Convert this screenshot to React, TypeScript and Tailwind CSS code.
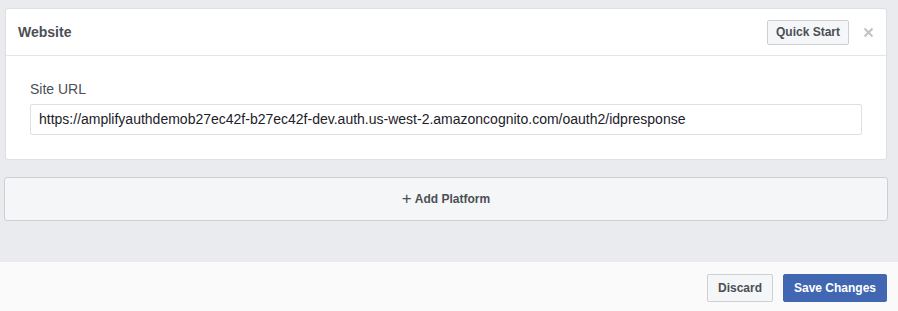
import React from "react";

export default function App() {
  return (
    <div
      className="w-[898px] h-[311px] flex flex-col overflow-hidden"
      style={{ fontFamily: '"Liberation Sans", Arial, sans-serif' }}
    >
      <div className="h-[262px] bg-[#e9ebee] pt-[8px] pl-[4px] pr-[10px] flex flex-col">
        <div className="mx-[1px] h-[152px] bg-white border border-[#dddfe2] rounded-[3px] flex flex-col">
          <div className="h-[47px] shrink-0 border-b border-[#e5e5e5] flex items-center pl-[12px] pr-[12px]">
            <div className="text-[14px] font-bold text-[#4b4f56]">Website</div>
            <div className="flex-1" />
            <button className="h-[25px] w-[82px] bg-[#f5f6f7] border border-[#ccd0d5] rounded-[2px] text-[12px] font-bold text-[#4b4f56] flex items-center justify-center">
              Quick Start
            </button>
            <div className="ml-[14px] w-[11px] h-[11px] flex items-center justify-center">
              <svg width="11" height="11" viewBox="0 0 11 11">
                <path d="M1.5 1.5 L9.5 9.5 M9.5 1.5 L1.5 9.5" stroke="#bec2c9" strokeWidth="2" />
              </svg>
            </div>
          </div>
          <div className="pt-[25px] px-[24px] flex flex-col">
            <div className="text-[14px] text-[#4b4f56] leading-[17px]">Site URL</div>
            <div className="mt-[6px] h-[31px] border border-[#dddfe2] rounded-[2px] flex items-center px-[8px] text-[14px] text-[#1d2129]">
              https://amplifyauthdemob27ec42f-b27ec42f-dev.auth.us-west-2.amazoncognito.com/oauth2/idpresponse
            </div>
          </div>
        </div>
        <div className="mt-[17px] h-[44px] bg-[#f5f6f7] border border-[#ccd0d5] rounded-[3px] flex items-center justify-center text-[12px] font-bold text-[#4b4f56]">
          <span className="text-[17px] font-normal mr-[3px] leading-none relative top-[-1px]">+</span>
          Add Platform
        </div>
      </div>
      <div className="flex-1 bg-[#fafafa] flex items-center justify-end pr-[11px] pt-[3px]">
        <button className="h-[28px] w-[66px] bg-[#f5f6f7] border border-[#ccd0d5] rounded-[2px] text-[12px] font-bold text-[#4b4f56]">
          Discard
        </button>
        <button className="ml-[10px] h-[28px] w-[104px] bg-[#4267b2] border border-[#4267b2] rounded-[2px] text-[12px] font-bold text-white">
          Save Changes
        </button>
      </div>
    </div>
  );
}
